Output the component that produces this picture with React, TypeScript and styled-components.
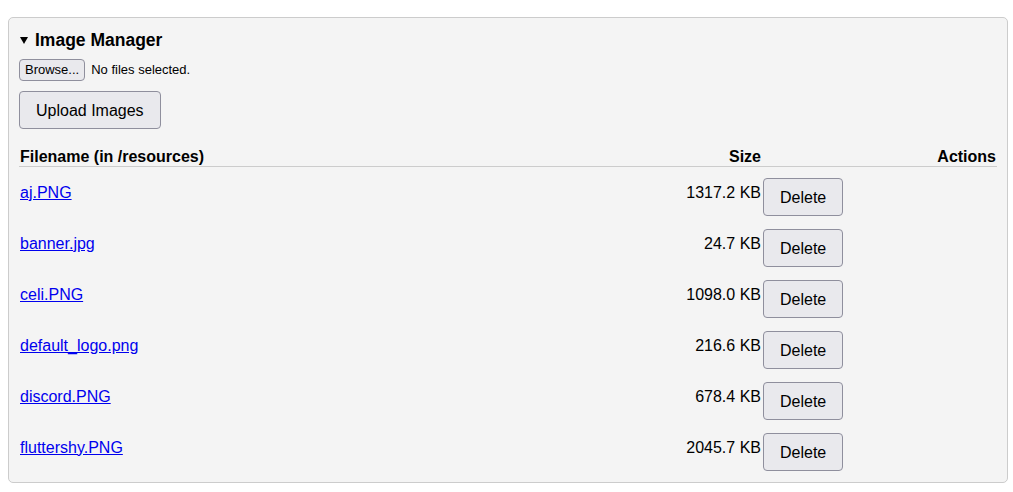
import styled, { createGlobalStyle } from "styled-components";

const GlobalStyle = createGlobalStyle`
  body {
    margin: 0;
    background: #ffffff;
    font-family: "Liberation Sans", Arial, sans-serif;
    color: #000000;
  }
`;

const Page = styled.div`
  padding: 17px 0 9px 8px;
`;

const Panel = styled.section`
  box-sizing: border-box;
  width: 1000px;
  padding: 12px 10px 11px;
  background: #f4f4f4;
  border: 1px solid #cccccc;
  border-radius: 5px;
`;

const Summary = styled.div`
  display: flex;
  align-items: center;
  height: 20px;
  font-size: 17.5px;
  font-weight: bold;
  line-height: 20px;
  cursor: pointer;
`;

const Caret = styled.span`
  width: 0;
  height: 0;
  margin: 1px 7px 0 1px;
  border-left: 4px solid transparent;
  border-right: 4px solid transparent;
  border-top: 7px solid #000000;
`;

const FilePicker = styled.div`
  display: flex;
  align-items: center;
  gap: 6px;
  margin-top: 8.5px;
  font-size: 13px;
`;

const PickerButton = styled.button`
  box-sizing: border-box;
  height: 22px;
  padding: 0 5px;
  font-family: inherit;
  font-size: 13px;
  line-height: 14px;
  color: #000000;
  background: #e9e9ed;
  border: 1px solid #8f8f9d;
  border-radius: 4px;
`;

const Button = styled.button`
  box-sizing: border-box;
  height: 38px;
  padding: 2px 16px 0;
  font-family: inherit;
  font-size: 16px;
  line-height: 18px;
  color: #000000;
  background: #e9e9ed;
  border: 1px solid #8f8f9d;
  border-radius: 4px;
  cursor: pointer;
`;

const UploadRow = styled.div`
  margin-top: 10px;
`;

const Columns = styled.div`
  display: grid;
  grid-template-columns: 1fr 120px 234px;
  column-gap: 2px;
`;

const HeaderRow = styled(Columns)`
  margin-top: 18px;
  border-bottom: 1px solid #cccccc;
  font-size: 16px;
  font-weight: bold;
  line-height: 19px;
`;

const HeaderCell = styled.div<{ $align?: "left" | "right" }>`
  text-align: ${(p) => p.$align ?? "left"};

  &:first-child {
    padding-left: 1px;
  }

  &:last-child {
    padding-right: 1px;
  }
`;

const Body = styled.div`
  display: flex;
  flex-direction: column;
  gap: 13px;
  padding-top: 11px;
`;

const FileRow = styled(Columns)`
  align-items: start;
  font-size: 16px;
`;

const TextCell = styled.div<{ $align?: "left" | "right" }>`
  padding: 6px 0 0 1px;
  line-height: normal;
  text-align: ${(p) => p.$align ?? "left"};
  white-space: nowrap;
`;

const FileLink = styled.a`
  color: #0000ee;
  text-decoration: underline;
`;

type ImageFile = {
  name: string;
  size: string;
};

const files: ImageFile[] = [
  { name: "aj.PNG", size: "1317.2 KB" },
  { name: "banner.jpg", size: "24.7 KB" },
  { name: "celi.PNG", size: "1098.0 KB" },
  { name: "default_logo.png", size: "216.6 KB" },
  { name: "discord.PNG", size: "678.4 KB" },
  { name: "fluttershy.PNG", size: "2045.7 KB" },
];

const App = () => {
  return (
    <Page>
      <GlobalStyle />
      <Panel>
        <Summary>
          <Caret />
          Image Manager
        </Summary>
        <FilePicker>
          <PickerButton>Browse...</PickerButton>
          <span>No files selected.</span>
        </FilePicker>
        <UploadRow>
          <Button>Upload Images</Button>
        </UploadRow>
        <HeaderRow>
          <HeaderCell>Filename (in /resources)</HeaderCell>
          <HeaderCell $align="right">Size</HeaderCell>
          <HeaderCell $align="right">Actions</HeaderCell>
        </HeaderRow>
        <Body>
          {files.map((file) => (
            <FileRow key={file.name}>
              <TextCell>
                <FileLink href={`/resources/${file.name}`}>{file.name}</FileLink>
              </TextCell>
              <TextCell $align="right">{file.size}</TextCell>
              <div>
                <Button>Delete</Button>
              </div>
            </FileRow>
          ))}
        </Body>
      </Panel>
    </Page>
  );
};

export default App;
